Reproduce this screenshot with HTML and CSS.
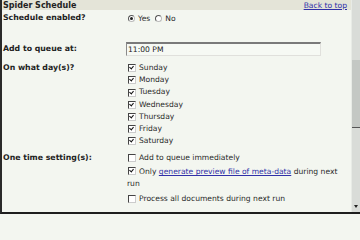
FILE: index.html
```html
<!DOCTYPE html>
<html>
<head>
<meta charset="utf-8">
<link rel="stylesheet" href="styles.css">
</head>
<body>
<div class="frame">
  <div class="content">
    <div class="header">
      <span class="title">Spider Schedule</span>
      <a class="toplink" href="#">Back to top</a>
    </div>
    <div class="row row-enabled">
      <div class="label">Schedule enabled?</div>
      <div class="field radios">
        <span class="radio on"></span><span class="opt">Yes</span>
        <span class="radio"></span><span class="opt">No</span>
      </div>
    </div>
    <div class="row row-queue">
      <div class="label">Add to queue at:</div>
      <div class="field"><div class="input">11:00 PM</div></div>
    </div>
    <div class="row row-days">
      <div class="label">On what day(s)?</div>
      <div class="field list">
        <div class="item"><span class="cb on"></span>Sunday</div>
        <div class="item"><span class="cb on"></span>Monday</div>
        <div class="item"><span class="cb on"></span>Tuesday</div>
        <div class="item"><span class="cb on"></span>Wednesday</div>
        <div class="item"><span class="cb on"></span>Thursday</div>
        <div class="item"><span class="cb on"></span>Friday</div>
        <div class="item"><span class="cb on"></span>Saturday</div>
      </div>
    </div>
    <div class="row row-once">
      <div class="label">One time setting(s):</div>
      <div class="field opts">
        <div class="item"><span class="cb"></span>Add to queue immediately</div>
        <div class="item wrap"><span class="cb on"></span><span>Only</span> <a href="#">generate preview file of meta-data</a> <span>during next</span><br><span>run</span></div>
        <div class="item"><span class="cb"></span>Process all documents during next run</div>
      </div>
    </div>
  </div>
  <div class="scrollbar">
    <div class="thumb"></div>
    <div class="arrow"></div>
  </div>
</div>
</body>
</html>
```
FILE: styles.css
```css
html, body {
  margin: 0;
  padding: 0;
  width: 360px;
  height: 214px;
  overflow: hidden;
  background: #f3f6f0;
}
.frame {
  display: flex;
  width: 360px;
  height: 214px;
  box-sizing: border-box;
  border-left: 2px solid #2a2a2a;
  border-bottom: 2px solid #1e1e1e;
  font-family: "DejaVu Sans", Verdana, sans-serif;
  font-size: 7.6px;
  color: #2a2a2a;
}
.content {
  flex: 1;
  min-width: 0;
}
.header {
  display: flex;
  justify-content: space-between;
  align-items: center;
  height: 10px;
  background: #e4e4d8;
  padding: 0 4px 0 1px;
}
.title {
  font-weight: bold;
  font-size: 8px;
  color: #222;
}
a {
  color: #3030a8;
  text-decoration: underline;
}
.toplink {
  font-size: 7.6px;
}
.row {
  display: grid;
  grid-template-columns: 124px 1fr;
}
.label {
  font-weight: bold;
  font-size: 7.8px;
  line-height: 12px;
  padding-left: 1px;
  color: #222;
}
.row-enabled {
  height: 32px;
  padding-top: 2px;
  box-sizing: border-box;
}
.radios {
  display: flex;
  align-items: center;
  height: 12px;
  padding-left: 2px;
}
.radio {
  width: 5px;
  height: 5px;
  border-radius: 50%;
  border: 1px solid #bbb;
  border-top-color: #555;
  border-left-color: #555;
  background: #fff;
  margin-right: 3px;
  position: relative;
}
.radio.on::after {
  content: "";
  position: absolute;
  left: 1px;
  top: 1px;
  width: 3px;
  height: 3px;
  border-radius: 50%;
  background: #222;
}
.opt {
  margin-right: 5px;
}
.row-queue {
  height: 20px;
  align-items: start;
}
.row-queue .label {
  padding-top: 1px;
}
.input {
  width: 192px;
  height: 11px;
  box-sizing: content-box;
  border-top: 2px solid #7a7a7a;
  border-left: 1px solid #8a8a8a;
  border-right: 1px solid #e0e0dc;
  border-bottom: 1px solid #e0e0dc;
  background: #f6f9f4;
  line-height: 11px;
  padding-left: 1px;
  color: #222;
}
.item {
  display: flex;
  align-items: center;
  line-height: 12px;
  padding-left: 2px;
}
.list .item {
  line-height: 12.2px;
}
.row-once {
  margin-top: 5px;
}
.opts {
  display: flex;
  flex-direction: column;
  gap: 2px;
}
.opts .wrap {
  display: block;
  padding-left: 1px;
}
.opts .wrap .cb {
  display: inline-block;
  vertical-align: -1px;
  margin-left: 1px;
}
.opts .wrap + .item {
  margin-top: 1px;
}
.cb {
  flex: none;
  width: 6px;
  height: 6px;
  border: 1px solid #ccc;
  border-top-color: #444;
  border-left-color: #444;
  background: #fff;
  margin-right: 3px;
  position: relative;
}
.cb.on::after {
  content: "";
  position: absolute;
  left: 1px;
  top: 0px;
  width: 2px;
  height: 3px;
  border-right: 1.5px solid #111;
  border-bottom: 1.5px solid #111;
  transform: rotate(40deg);
}
.scrollbar {
  flex: none;
  width: 8px;
  background: #d9dcd8;
  border-left: 1px solid #e8ebe6;
  display: flex;
  flex-direction: column;
}
.thumb {
  margin-top: 60px;
  height: 67px;
  background: #c4c8c4;
  border-bottom: 1px solid #555;
}
.arrow {
  margin-top: auto;
  height: 6px;
  position: relative;
  margin-bottom: 2px;
}
.arrow::after {
  content: "";
  position: absolute;
  left: 2px;
  top: 1px;
  border-left: 2px solid transparent;
  border-right: 2px solid transparent;
  border-top: 3px solid #222;
}
```
